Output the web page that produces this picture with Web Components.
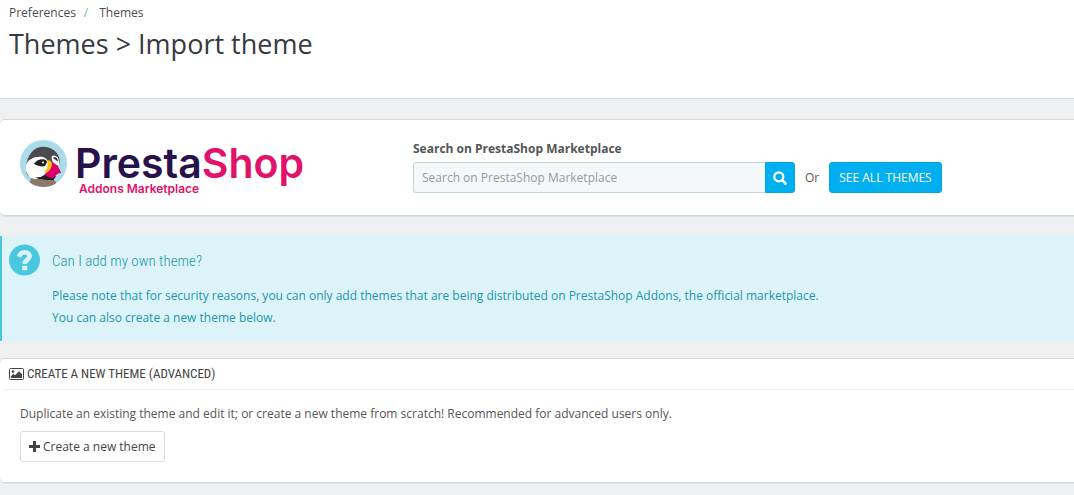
<!DOCTYPE html>
<html lang="en">
<head>
<meta charset="utf-8">
<title>Themes &gt; Import theme</title>
<style>
	body {
		margin: 0;
		background: #eff0f2;
		color: #555;
		font: 12px/18px "Open Sans", "Noto Sans", sans-serif;
		--narrow: "Ubuntu Condensed", "Roboto Condensed", "Liberation Sans Narrow", "Open Sans", sans-serif;
	}
	main {
		display: flex;
		flex-direction: column;
		padding: 20px 0 12px;
	}
</style>
</head>
<body>
<page-head heading="Themes &gt; Import theme">
	<a href="#preferences">Preferences</a>
	<a href="#themes">Themes</a>
</page-head>
<main>
	<ps-panel>
		<addons-search></addons-search>
	</ps-panel>
	<info-alert heading="Can I add my own theme?">
		Please note that for security reasons, you can only add themes that are being distributed on PrestaShop Addons, the official marketplace.<br>
		You can also create a new theme below.
	</info-alert>
	<ps-panel heading="Create a new theme (advanced)">
		<create-theme></create-theme>
	</ps-panel>
</main>

<script>
(function() {
	function define(name, html, setup) {
		let template = document.createElement("template");
		template.innerHTML = html;
		customElements.define(name, class extends HTMLElement {
			constructor() {
				super();
				this.attachShadow({mode: "open"});
				this.shadowRoot.appendChild(template.content.cloneNode(true));
			}

			connectedCallback() {
				if (setup) {
					setup(this, this.shadowRoot);
				}
			}
		});
	}

	define("page-head", `
		<style>
			:host {
				display: block;
				box-sizing: border-box;
				min-height: 99px;
				padding: 4px 9px;
				background: #fff;
				border-bottom: 1px solid #d3d8db;
			}
			nav {
				display: flex;
			}
			::slotted(a) {
				color: #4d4d4d;
				text-decoration: none;
			}
			::slotted(a:not(:last-child))::after {
				content: "/";
				color: #72c279;
				padding: 0 11px 0 8px;
			}
			h1 {
				margin: 4px 0 0;
				color: #363a41;
				font-size: 27px;
				font-weight: 400;
				line-height: 36px;
			}
		</style>
		<nav aria-label="Breadcrumb"><slot></slot></nav>
		<h1></h1>
	`, (host, root) => {
		root.querySelector("h1").textContent = host.getAttribute("heading");
	});

	define("ps-panel", `
		<style>
			:host {
				display: block;
				padding: 20px;
				background: #fff;
				border: 1px solid #d3d8db;
				border-width: 1px 0;
				border-radius: 5px 0 0 5px;
				box-shadow: 0 1px 1px #dfe2e4;
			}
			:host([heading]) {
				padding-top: 0;
			}
			h3 {
				display: flex;
				align-items: center;
				gap: 3px;
				margin: 0 -20px 15px -15px;
				padding-left: 4px;
				border-bottom: 1px solid #eee;
				color: #444;
				font: 400 13px/30px var(--narrow);
				text-transform: uppercase;
			}
			:host(:not([heading])) h3 {
				display: none;
			}
		</style>
		<h3>
			<svg width="15" height="12" viewBox="0 0 15 12" aria-hidden="true">
				<rect x=".5" y=".5" width="14" height="11" rx="1" fill="none" stroke="#444"/>
				<circle cx="4" cy="3.6" r="1.3" fill="#444"/>
				<path d="M2 10V8.2L4.5 5.8 6 7.3 10 3.2 13 6.2V10Z" fill="#444"/>
			</svg>
			<span></span>
		</h3>
		<slot></slot>
	`, (host, root) => {
		root.querySelector("h3 span").textContent = host.getAttribute("heading") || "";
	});

	define("addons-logo", `
		<style>
			:host {
				display: block;
			}
			svg {
				display: block;
				overflow: visible;
			}
		</style>
		<svg width="290" height="53" viewBox="0 0 290 53" role="img" aria-label="PrestaShop Addons Marketplace">
			<clipPath id="disc"><circle cx="23.5" cy="23.5" r="23.5"/></clipPath>
			<g clip-path="url(#disc)">
				<rect width="47" height="47" fill="#a9dbe9"/>
				<path d="M7 35C4 23 9 12 17 8 25 5 34 8 38 15 40 18 40 22 39 25L30 38Z" fill="#4b4a4d"/>
				<path d="M6 25C8 19 15 16 23 17 26 18 28 20 28 23L29 34C24 40 14 42 9 36 6 33 5 29 6 25Z" fill="#fff"/>
				<path d="M32 16C36 14 40 18 39 26L34 24C32 21 31 18 32 16Z" fill="#fff"/>
				<path d="M14 24C16 20 22 18 26 20L27 22 25 26C22 27 18 26 14 24Z" fill="#222024"/>
				<circle cx="23" cy="22.500" r="1" fill="#fff"/>
				<path d="M33 18C35 16 38 18 38 22L36 20Z" fill="#222024"/>
				<path d="M15 37C21 38 24 36 27 32L36 36 33 41 22 41Z" fill="#222024"/>
				<path d="M27 20C31 20 33 23 32 27L29 34 24 32C28 29 28 25 27 20Z" fill="#fbc21b"/>
				<path d="M32 22C36 24 40 28 41 33 38 33 35 35 34 38 30 38 26 37 25 34 30 31 32 28 32 22Z" fill="#df0067"/>
				<path d="M11 38C16 40 21 38 26 40L34 40 36 42V48H8Z" fill="#8b7968"/>
			</g>
			<text x="55" y="38" font-family="Inter, sans-serif" font-size="41" font-weight="600" fill="#27124b">Presta<tspan fill="#e01269">Shop</tspan></text>
			<text x="59" y="53" font-family="Inter, sans-serif" font-size="12" font-weight="600" fill="#e01269">Addons Marketplace</text>
		</svg>
	`);

	define("addons-search", `
		<style>
			:host {
				display: grid;
				grid-template-columns: 393fr 382fr 259fr;
				padding-bottom: 2px;
			}
			label {
				display: block;
				margin-bottom: 4px;
				font-weight: 700;
			}
			.group {
				display: flex;
			}
			input {
				flex: 1;
				min-width: 0;
				height: 31px;
				box-sizing: border-box;
				padding: 0 8px;
				border: 1px solid #c7d6db;
				border-right: 0;
				border-radius: 3px 0 0 3px;
				background: #f5f8f9;
				color: #555;
				font: inherit;
			}
			input::placeholder {
				color: #999;
			}
			.group button {
				display: grid;
				place-items: center;
				width: 30px;
				padding: 0;
				border: 1px solid #00a4e7;
				border-radius: 0 3px 3px 0;
				background: #00aff0;
			}
			.more {
				display: flex;
				align-items: center;
				align-self: end;
				gap: 10px;
				padding-left: 10px;
			}
			.more a {
				padding: 6px 9px;
				border: 1px solid #00a4e7;
				border-radius: 3px;
				background: #00aff0;
				color: #fff;
				line-height: 17px;
				text-decoration: none;
				text-transform: uppercase;
			}
		</style>
		<addons-logo></addons-logo>
		<form>
			<label for="query">Search on PrestaShop Marketplace</label>
			<div class="group">
				<input id="query" type="text" placeholder="Search on PrestaShop Marketplace">
				<button type="button" aria-label="Search">
					<svg width="14" height="14" viewBox="0 0 14 14" fill="none" stroke="#fff" aria-hidden="true">
						<circle cx="5.800" cy="5.800" r="4.500" stroke-width="2.200"/>
						<path d="M9.200 9.200 12.500 12.500" stroke-width="2.600" stroke-linecap="round"/>
					</svg>
				</button>
			</div>
		</form>
		<div class="more"><span>Or</span><a href="#addons">See all themes</a></div>
	`);

	define("info-alert", `
		<style>
			:host {
				display: grid;
				grid-template-columns: 31px 1fr;
				gap: 12px;
				margin: 20px 0 17px;
				padding: 8px 7px 12px;
				border-left: 2px solid #4ac7e0;
				background: #dcf4f9;
				color: #1e94ab;
				line-height: 22px;
			}
			h4 {
				margin: 6px 0 13px;
				font: 300 15px/22px var(--narrow);
			}
		</style>
		<svg width="31" height="32" viewBox="0 0 31 32" aria-hidden="true">
			<circle cx="15.5" cy="16" r="15.5" fill="#4ac7e0"/>
			<path d="M10 12.800C11 9.800 12.800 8.300 15.400 8.300 18.500 8.300 20.600 10 20.600 12.300 20.600 15.800 15.700 15.400 15.700 20" fill="none" stroke="#dcf4f9" stroke-width="4.600"/>
			<rect x="13.200" y="21.800" width="5" height="4.400" fill="#dcf4f9"/>
		</svg>
		<div>
			<h4></h4>
			<slot></slot>
		</div>
	`, (host, root) => {
		root.querySelector("h4").textContent = host.getAttribute("heading");
	});

	define("create-theme", `
		<style>
			:host {
				display: block;
			}
			p {
				margin: 0 0 8px;
			}
			button {
				display: flex;
				align-items: center;
				gap: 3px;
				padding: 6px 8px;
				border: 1px solid #ddd;
				border-radius: 3px;
				background: #fff;
				color: #444;
				font: inherit;
				line-height: 17px;
			}
		</style>
		<p>Duplicate an existing theme and edit it; or create a new theme from scratch! Recommended for advanced users only.</p>
		<button type="button">
			<svg width="11" height="11" viewBox="0 0 11 11" aria-hidden="true">
				<path d="M4 0H7V4H11V7H7V11H4V7H0V4H4Z" fill="#444"/>
			</svg>
			Create a new theme
		</button>
	`);
})();
</script>
</body>
</html>
